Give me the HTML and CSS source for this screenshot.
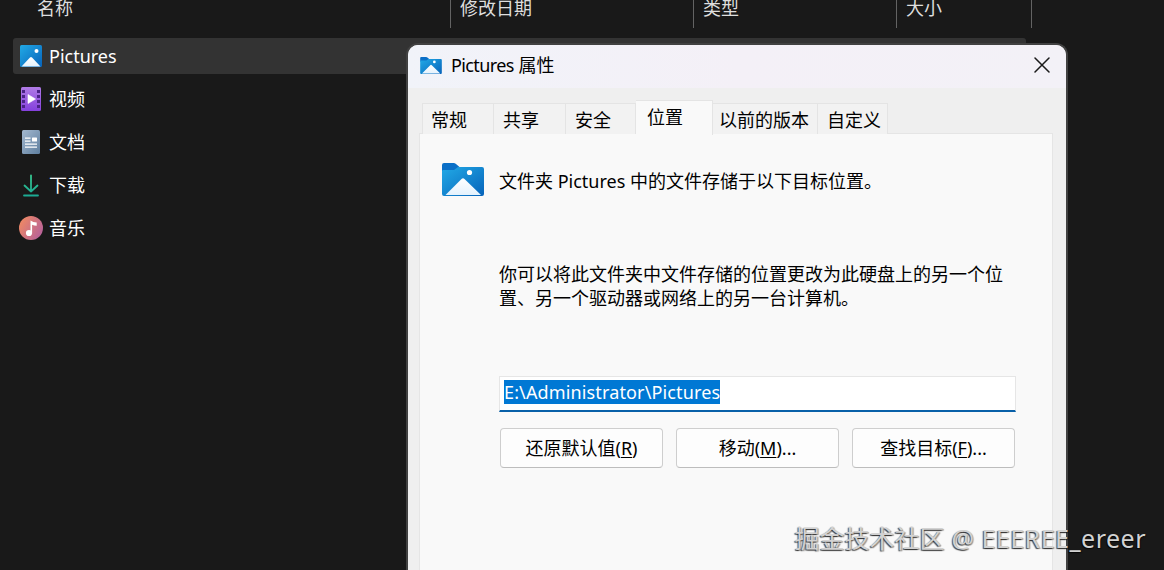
FILE: index.html
```html
<!DOCTYPE html>
<html lang="zh-CN">
<head>
    <meta charset="UTF-8">
    <meta name="viewport" content="width=device-width, initial-scale=1.0">
    <title>Pictures 属性</title>
    <link rel="stylesheet" href="styles.css">
</head>
<body>
    <!-- Gradients shared by the icons -->
    <svg class="defs" width="0" height="0">
        <defs>
            <linearGradient id="blue" x1="0" y1="0" x2="1" y2="1">
                <stop offset="0" stop-color="#22aae6"/>
                <stop offset="1" stop-color="#0763ba"/>
            </linearGradient>
            <linearGradient id="snow" x1="0" y1="0" x2="0" y2="1">
                <stop offset="0" stop-color="#ffffff"/>
                <stop offset="1" stop-color="#e4f2fd"/>
            </linearGradient>
            <linearGradient id="purple" x1="0" y1="0" x2="0" y2="1">
                <stop offset="0" stop-color="#b07be6"/>
                <stop offset="1" stop-color="#8440dc"/>
            </linearGradient>
            <linearGradient id="slate" x1="0" y1="0" x2="1" y2="1">
                <stop offset="0" stop-color="#a3b8cf"/>
                <stop offset="1" stop-color="#5f7f9f"/>
            </linearGradient>
            <linearGradient id="green" gradientUnits="userSpaceOnUse" x1="0" y1="0" x2="0" y2="24">
                <stop offset="0" stop-color="#39c98f"/>
                <stop offset="1" stop-color="#1aa893"/>
            </linearGradient>
            <linearGradient id="coral" x1="0" y1="0.2" x2="1" y2="0.8">
                <stop offset="0" stop-color="#f08a62"/>
                <stop offset="1" stop-color="#b45f9c"/>
            </linearGradient>
            <symbol id="folder" viewBox="0 0 42 33">
                <path d="M0 2Q0 0 2 0H11.500Q13 0 14 1L17.500 4V9H0Z" fill="#0a6fc7"/>
                <path d="M0 8Q0 7 1.500 7H12L16 4H40Q42 4 42 6V31Q42 33 40 33H2Q0 33 0 31Z" fill="url(#blue)"/>
                <path d="M3.500 32L19.500 16Q21 14.500 22.500 16L39 32Z" fill="url(#snow)"/>
                <circle cx="27.500" cy="9.500" r="2.600" fill="#fff"/>
            </symbol>
        </defs>
    </svg>

    <div class="explorer">
        <div class="columns">
            <div class="column name">名称</div>
            <div class="column date">修改日期</div>
            <div class="column type">类型</div>
            <div class="column size">大小</div>
        </div>
        <div class="files">
            <div class="file selected">
                <svg class="icon" viewBox="0 0 24 24">
                    <rect x="1" y="1" width="22" height="22" rx="1.500" fill="url(#blue)"/>
                    <path d="M2.500 22.500L11 13.500Q12 12.500 13 13.500L21.500 22.500Z" fill="url(#snow)"/>
                    <circle cx="17.500" cy="7" r="2" fill="#fff"/>
                </svg>
                <span>Pictures</span>
            </div>
            <div class="file">
                <svg class="icon" viewBox="0 0 24 24">
                    <rect x="2" y="0" width="20" height="24" rx="1.500" fill="url(#purple)"/>
                    <path d="M3 3h3v3h-3zM3 8h3v3h-3zM3 13h3v3h-3zM3 18h3v3h-3zM18 3h3v3h-3zM18 8h3v3h-3zM18 13h3v3h-3zM18 18h3v3h-3z" fill="#4b2486"/>
                    <path d="M9 7.500V16.500L16.500 12Z" fill="#fff" stroke="#fff" stroke-width=".6" stroke-linejoin="round"/>
                </svg>
                <span>视频</span>
            </div>
            <div class="file">
                <svg class="icon" viewBox="0 0 24 24">
                    <rect x="3" y="0" width="18" height="24" rx="1.500" fill="url(#slate)"/>
                    <path d="M6 8.200h5.500M6 11.200h5.500M6 14.200h12M6 17.200h12" stroke="#fff" stroke-width="1.200"/>
                    <rect x="13" y="7.500" width="5" height="4" rx=".6" fill="#fff"/>
                </svg>
                <span>文档</span>
            </div>
            <div class="file">
                <svg class="icon" viewBox="0 0 24 24" fill="none" stroke="url(#green)" stroke-width="1.800" stroke-linecap="round" stroke-linejoin="round">
                    <path d="M12 2.300V18.500M12.001 18.500L5.500 12.500M12 18.500L18.500 12.500"/>
                    <path d="M5 22.500L19 22.501"/>
                </svg>
                <span>下载</span>
            </div>
            <div class="file">
                <svg class="icon" viewBox="0 0 24 24">
                    <circle cx="12" cy="12" r="12" fill="url(#coral)"/>
                    <circle cx="10" cy="17" r="3.100" fill="#fff"/>
                    <path d="M11.500 17V4.500Q14 6.500 17.700 6.500V9.800Q15 9.800 13.100 8.700V17Z" fill="#fff"/>
                </svg>
                <span>音乐</span>
            </div>
        </div>
    </div>

    <div class="dialog">
        <div class="title-bar">
            <svg class="title-icon"><use href="#folder"/></svg>
            <span class="title"><span class="folder-name">Pictures</span> 属性</span>
            <svg class="close" viewBox="0 0 16 16">
                <path d="M1 1L15 15M15 1L1 15" stroke="#1a1a1a" stroke-width="1.500" stroke-linecap="round"/>
            </svg>
        </div>
        <div class="tabs">
            <div class="tab general">常规</div>
            <div class="tab share">共享</div>
            <div class="tab security">安全</div>
            <div class="tab active">位置</div>
            <div class="tab versions">以前的版本</div>
            <div class="tab custom">自定义</div>
        </div>
        <div class="panel">
            <div class="intro">
                <svg class="folder-icon"><use href="#folder"/></svg>
                <span>文件夹 Pictures 中的文件存储于以下目标位置。</span>
            </div>
            <p class="hint">你可以将此文件夹中文件存储的位置更改为此硬盘上的另一个位<br>置、另一个驱动器或网络上的另一台计算机。</p>
            <div class="path-input"><span class="selection">E:\Administrator\Pictures</span></div>
            <div class="buttons">
                <button>还原默认值(<u>R</u>)</button>
                <button>移动(<u>M</u>)...</button>
                <button>查找目标(<u>F</u>)...</button>
            </div>
        </div>
    </div>

    <div class="watermark">掘金技术社区<span class="author"> @ EEEREE_ereer</span></div>
</body>
</html>
```
FILE: styles.css
```css
* {
    box-sizing: border-box;
}
body {
    position: relative;
    width: 1164px;
    height: 570px;
    margin: 0;
    overflow: hidden;
    background-color: #191919;
    color: #fff;
    font-family: "Noto Sans", "Noto Sans CJK SC", sans-serif;
    font-size: 18px;
    font-weight: 400;
    line-height: 24px;
}
svg {
    display: block;
    flex-shrink: 0;
}
.defs {
    position: absolute;
}

/* File list */
.columns {
    display: flex;
    height: 28px;
    color: #dedede;
}
.column {
    height: 28px;
    padding-left: 9px;
    border-right: 1px solid #636363;
    line-height: 17px;
}
.column.name {
    width: 451px;
    padding-left: 37px;
}
.column.date {
    width: 243px;
}
.column.type {
    width: 203px;
}
.column.size {
    width: 135px;
}
.files {
    display: flex;
    flex-direction: column;
    gap: 7px;
    width: 1013px;
    margin: 10px 0 0 13px;
}
.file {
    display: flex;
    align-items: center;
    gap: 6px;
    height: 36px;
    padding-left: 6px;
    border-radius: 3px;
}
.file.selected {
    background-color: #333;
}
.icon {
    width: 24px;
    height: 24px;
}

/* Properties dialog, floats over the file list */
.dialog {
    position: absolute;
    left: 406px;
    top: 43px;
    width: 662px;
    height: 527px;
    border: 2px solid #414141;
    border-bottom: none;
    border-radius: 12px 12px 0 0;
    background-color: #efefef;
    color: #000;
    overflow: hidden;
}
.title-bar {
    display: flex;
    align-items: center;
    height: 43px;
    padding: 0 16px 3px 12px;
    background: linear-gradient(90deg, #f1f3f9, #f4f0f7 50%, #f3f1f7);
}
.title-icon {
    width: 22px;
    height: 17px;
}
.title {
    margin-left: 9px;
}
.folder-name {
    letter-spacing: -0.6px;
}
.close {
    width: 16px;
    height: 16px;
    margin-left: auto;
}
.tabs {
    display: flex;
    align-items: flex-end;
    height: 46px;
    padding-left: 14px;
}
.tab {
    height: 31px;
    padding-left: 9px;
    border: 1px solid #e4e4e4;
    border-left: none;
    border-bottom: none;
    background-color: #f2f2f2;
    line-height: 32px;
}
.tab.general {
    width: 72px;
    padding-left: 8px;
    border-left: 1px solid #e4e4e4;
}
.tab.share {
    width: 72px;
}
.tab.security {
    width: 70px;
}
.tab.active {
    position: relative;
    width: 77px;
    height: 35px;
    margin-bottom: -1px;
    padding-left: 11px;
    background-color: #f9f9f9;
    line-height: 33px;
}
.tab.versions {
    width: 105px;
    padding-left: 6px;
}
.tab.custom {
    width: 70px;
}
.panel {
    height: 437px;
    margin: -1px 13px 0 11px;
    padding: 29px 0 0 22px;
    border: 1px solid #e5e5e5;
    border-bottom: none;
    background-color: #f9f9f9;
}
.intro {
    display: flex;
    align-items: center;
    gap: 15px;
    height: 35px;
}
.folder-icon {
    width: 42px;
    height: 33px;
    margin-bottom: 2px;
}
.hint {
    margin: 64px 0 0 57px;
}
.path-input {
    width: 517px;
    height: 36px;
    margin: 66px 0 0 57px;
    padding: 3px 4px;
    border: 1px solid #e6e6e6;
    border-bottom: 2px solid #0860a8;
    background-color: #fff;
}
.selection {
    display: inline-block;
    height: 24px;
    background-color: #0078d4;
    color: #fff;
    letter-spacing: 0.14px;
}
.buttons {
    display: flex;
    gap: 13px;
    margin: 16px 0 0 58px;
}
button {
    width: 163px;
    height: 40px;
    padding: 0;
    border: 1px solid #cecece;
    border-bottom-color: #bdbdbd;
    border-radius: 4px;
    background-color: #fdfdfd;
    color: #000;
    font: inherit;
}
u {
    text-underline-offset: 2px;
}

.watermark {
    position: absolute;
    right: 18px;
    bottom: 16px;
    color: #d2d2d2;
    font-size: 25px;
    line-height: 32px;
    white-space: nowrap;
    text-shadow: -1px 1px 1px rgba(0, 0, 0, 0.7), 1px 1px 1px rgba(0, 0, 0, 0.4);
}
.author {
    letter-spacing: 0.5px;
}
```
